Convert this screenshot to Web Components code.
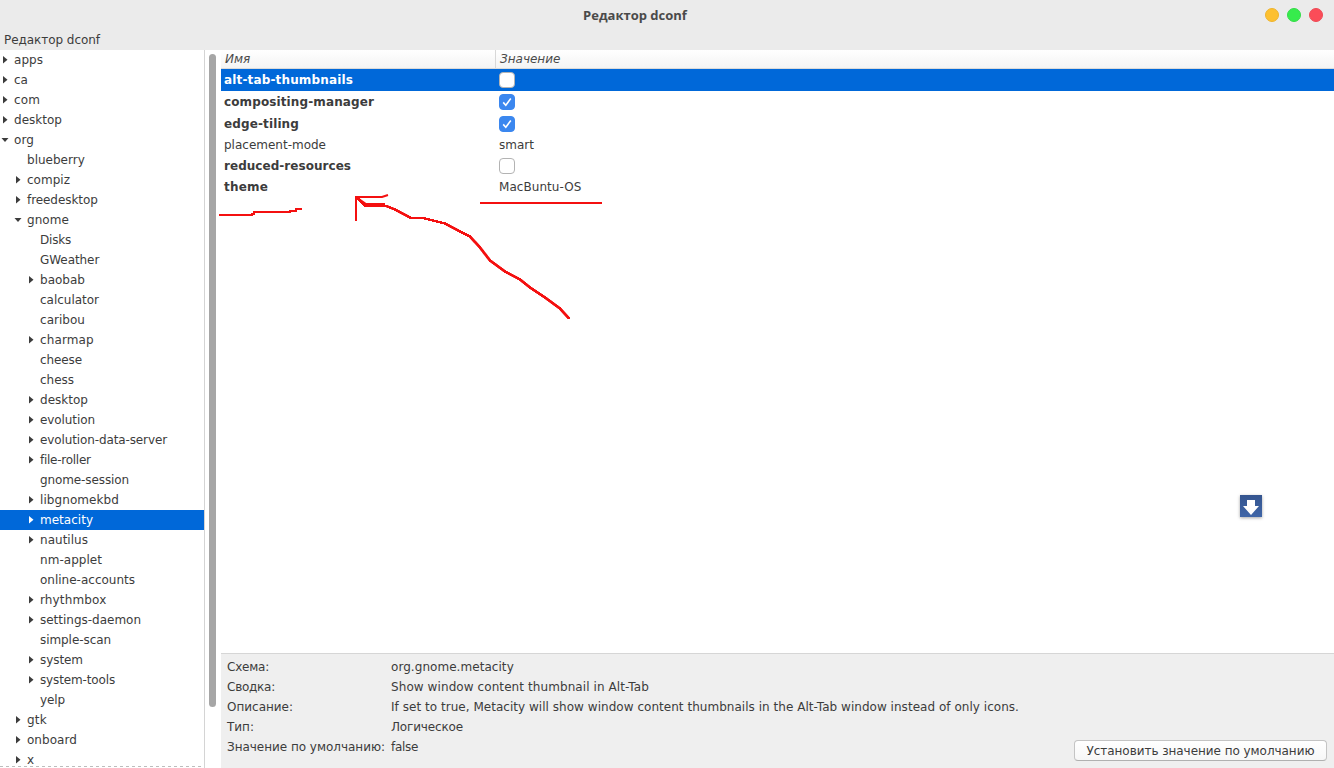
<!DOCTYPE html>
<html>
<head>
<meta charset="utf-8">
<title>Редактор dconf</title>
<style>
    html, body {
        margin: 0;
        height: 100%;
        overflow: hidden;
    }
    body {
        font: 13px "DejaVu Sans", sans-serif;
        color: #3c3c3c;
    }
</style>
</head>
<body>
<dconf-window>
    <title-bar slot="title">Редактор dconf</title-bar>
    <menu-bar slot="menu">Редактор dconf</menu-bar>
    <schema-tree slot="tree"></schema-tree>
    <key-list slot="keys"></key-list>
    <key-details slot="details"></key-details>
    <ink-overlay slot="overlay"></ink-overlay>
</dconf-window>

<script>
const TREE = [
    [0, 'apps', 'closed'], [0, 'ca', 'closed'], [0, 'com', 'closed'], [0, 'desktop', 'closed'],
    [0, 'org', 'open'], [1, 'blueberry'], [1, 'compiz', 'closed'], [1, 'freedesktop', 'closed'],
    [1, 'gnome', 'open'], [2, 'Disks'], [2, 'GWeather'], [2, 'baobab', 'closed'],
    [2, 'calculator'], [2, 'caribou'], [2, 'charmap', 'closed'], [2, 'cheese'], [2, 'chess'],
    [2, 'desktop', 'closed'], [2, 'evolution', 'closed'], [2, 'evolution-data-server', 'closed'],
    [2, 'file-roller', 'closed'], [2, 'gnome-session'], [2, 'libgnomekbd', 'closed'],
    [2, 'metacity', 'closed', true], [2, 'nautilus', 'closed'], [2, 'nm-applet'],
    [2, 'online-accounts'], [2, 'rhythmbox', 'closed'], [2, 'settings-daemon', 'closed'],
    [2, 'simple-scan'], [2, 'system', 'closed'], [2, 'system-tools', 'closed'], [2, 'yelp'],
    [1, 'gtk', 'closed'], [1, 'onboard', 'closed'], [1, 'x', 'closed'],
];

const KEYS = [
    { name: 'alt-tab-thumbnails', bold: true, check: false, selected: true },
    { name: 'compositing-manager', bold: true, check: true },
    { name: 'edge-tiling', bold: true, check: true },
    { name: 'placement-mode', value: 'smart' },
    { name: 'reduced-resources', bold: true, check: false },
    { name: 'theme', bold: true, value: 'MacBuntu-OS' },
];

const DETAILS = [
    ['Схема:', 'org.gnome.metacity'],
    ['Сводка:', 'Show window content thumbnail in Alt-Tab'],
    ['Описание:', 'If set to true, Metacity will show window content thumbnails in the Alt-Tab window instead of only icons.'],
    ['Тип:', 'Логическое'],
    ['Значение по умолчанию:', 'false'],
];

// The screenshot has fully hinted text, every glyph advance is a whole pixel.
// Spread the difference over the string so the widths come out the same.
const measure = document.createElement('canvas').getContext('2d');
function hintText(el, text, prefix = '') {
    measure.font = `${prefix} 12px "DejaVu Sans"`;
    let exact = 0;
    let rounded = 0;
    for (const ch of text) {
        const w = measure.measureText(ch).width;
        exact += w;
        rounded += Math.round(w);
    }
    el.style.fontKerning = 'normal';
    el.style.letterSpacing = ((rounded - exact) / text.length).toFixed(3) + 'px';
}

// Squeeze a hand drawn line into small flat steps, like a mouse stroke in an image editor.
function stairs(points) {
    let d = `M${points[0][0]} ${points[0][1]}`;
    for (let i = 1; i < points.length; i++) {
        const [x0, y0] = points[i - 1];
        const [x1, y1] = points[i];
        const steps = Math.max(1, Math.round(Math.abs(y1 - y0)));
        for (let s = 1; s <= steps; s++) {
            const x = x0 + (x1 - x0) * s / steps;
            const y = y0 + (y1 - y0) * s / steps;
            d += ` H${x.toFixed(1)} V${y.toFixed(1)}`;
        }
    }
    return d;
}

class DconfWindow extends HTMLElement {
    constructor() {
        super();
        this.attachShadow({ mode: 'open' }).innerHTML = `
            <style>
                :host {
                    display: grid;
                    grid-template-columns: 205px 16px 1fr;
                    grid-template-rows: 30px 20px 1fr auto;
                    width: 1334px;
                    height: 768px;
                    overflow: hidden;
                    position: relative;
                    background: #fff;
                }
                ::slotted([slot=title]), ::slotted([slot=menu]) { grid-column: 1 / -1; }
                ::slotted([slot=tree]) { grid-row: 3 / 5; grid-column: 1; }
                .bar { grid-row: 3 / 5; grid-column: 2; background: #fff; position: relative; }
                .thumb {
                    position: absolute;
                    left: 4px;
                    top: 4px;
                    width: 7px;
                    height: 653px;
                    border-radius: 4px;
                    background: #a6a6a6;
                }
                ::slotted([slot=keys]) { grid-row: 3; grid-column: 3; min-height: 0; }
                ::slotted([slot=details]) { grid-row: 4; grid-column: 3; }
            </style>
            <slot name="title"></slot>
            <slot name="menu"></slot>
            <slot name="tree"></slot>
            <div class="bar"><div class="thumb"></div></div>
            <slot name="keys"></slot>
            <slot name="details"></slot>
            <slot name="overlay"></slot>
        `;
    }
}
customElements.define('dconf-window', DconfWindow);

class TitleBar extends HTMLElement {
    constructor() {
        super();
        this.attachShadow({ mode: 'open' }).innerHTML = `
            <style>
                :host {
                    display: flex;
                    align-items: center;
                    justify-content: center;
                    position: relative;
                    padding-right: 64px;
                    background: #ebebeb;
                    font: bold 13px "Open Sans", "DejaVu Sans", sans-serif;
                    color: #4a4a4a;
                }
                .dots {
                    position: absolute;
                    right: 11px;
                    top: 8px;
                    display: flex;
                    gap: 8px;
                }
                i {
                    width: 14px;
                    height: 14px;
                    border-radius: 50%;
                    box-sizing: border-box;
                }
            </style>
            <slot></slot>
            <div class="dots">
                <i style="background:#fdc030;border:1px solid #eeb42e"></i>
                <i style="background:#36ec4c;border:1px solid #33dc48"></i>
                <i style="background:#fb4c58;border:1px solid #ee4a55"></i>
            </div>
        `;
    }
}
customElements.define('title-bar', TitleBar);

class MenuBar extends HTMLElement {
    constructor() {
        super();
        this.attachShadow({ mode: 'open' }).innerHTML = `
            <style>
                :host {
                    display: flex;
                    align-items: center;
                    padding-left: 4px;
                    background: #ebebeb;
                    font-size: 12px;
                }
            </style>
            <slot></slot>
        `;
    }

    connectedCallback() {
        hintText(this, this.textContent);
    }
}
customElements.define('menu-bar', MenuBar);

class TreeRow extends HTMLElement {
    constructor() {
        super();
        this.attachShadow({ mode: 'open' }).innerHTML = `
            <style>
                :host {
                    display: flex;
                    align-items: center;
                    height: 20px;
                    font-size: 12px;
                    white-space: nowrap;
                }
                :host([selected]) { background: #0068d9; color: #fff; }
                svg { width: 14px; height: 14px; flex: none; fill: #3c3c3c; }
                :host([selected]) svg { fill: #fff; }
                .pad { flex: none; }
            </style>
            <div class="pad"></div>
            <svg viewBox="0 0 14 14"><path></path></svg>
            <slot></slot>
        `;
    }

    connectedCallback() {
        const level = Number(this.getAttribute('level')) || 0;
        this.shadowRoot.querySelector('.pad').style.width = (level * 13) + 'px';
        const path = this.shadowRoot.querySelector('path');
        const state = this.getAttribute('state');
        if (state === 'closed') {
            path.setAttribute('d', 'M3 3 L7.5 6.7 L3 10.5 Z');
        } else if (state === 'open') {
            path.setAttribute('d', 'M1.5 5 L8.5 5 L5 9 Z');
        }
        hintText(this, this.textContent);
    }
}
customElements.define('tree-row', TreeRow);

class SchemaTree extends HTMLElement {
    constructor() {
        super();
        this.attachShadow({ mode: 'open' }).innerHTML = `
            <style>
                :host {
                    display: block;
                    box-sizing: border-box;
                    overflow: hidden;
                    background: #fff;
                    border-right: 1px solid #d4d4d4;
                    position: relative;
                }
                .undershoot {
                    position: absolute;
                    left: 0;
                    right: 0;
                    bottom: 1px;
                    height: 1px;
                    background: repeating-linear-gradient(90deg, #bdbdbd 0 3px, transparent 3px 6px);
                }
            </style>
            <slot></slot>
            <div class="undershoot"></div>
        `;
    }

    connectedCallback() {
        TREE.forEach(([level, name, state, selected]) => {
            const row = document.createElement('tree-row');
            row.setAttribute('level', level);
            if (state) row.setAttribute('state', state);
            if (selected) row.setAttribute('selected', '');
            row.textContent = name;
            this.appendChild(row);
        });
    }
}
customElements.define('schema-tree', SchemaTree);

class KeyCheck extends HTMLElement {
    constructor() {
        super();
        this.attachShadow({ mode: 'open' }).innerHTML = `
            <style>
                :host {
                    display: block;
                    box-sizing: border-box;
                    width: 16px;
                    height: 16px;
                    border-radius: 4px;
                    border: 1px solid #b3b3b3;
                    background: #fff;
                }
                :host([checked]) { background: #3b87ef; border-color: #3b87ef; }
                svg { display: none; width: 14px; height: 14px; }
                :host([checked]) svg { display: block; }
            </style>
            <svg viewBox="0 0 14 14"><path d="M3.2 7.4 L5.8 10.2 L10.8 3.6" fill="none" stroke="#fff" stroke-width="1.6"></path></svg>
        `;
    }
}
customElements.define('key-check', KeyCheck);

class KeyRow extends HTMLElement {
    constructor() {
        super();
        this.attachShadow({ mode: 'open' }).innerHTML = `
            <style>
                :host {
                    display: grid;
                    grid-template-columns: 278px 1fr;
                    align-items: center;
                    min-height: 20px;
                    font-size: 12px;
                }
                :host([bold]) .name { font-weight: bold; }
                :host([check]) { min-height: 22px; }
                :host([selected]) { background: #0068d9; color: #fff; }
                .name { padding-left: 3px; }
            </style>
            <div class="name"><slot name="name"></slot></div>
            <div class="value"><slot></slot></div>
        `;
    }
}
customElements.define('key-row', KeyRow);

class KeyList extends HTMLElement {
    constructor() {
        super();
        this.attachShadow({ mode: 'open' }).innerHTML = `
            <style>
                :host { display: block; background: #fff; overflow: hidden; }
                header {
                    display: grid;
                    grid-template-columns: 274px 1fr;
                    height: 19px;
                    box-sizing: border-box;
                    background: linear-gradient(#fff, #f4f4f4);
                    border-bottom: 1px solid #dadada;
                    font-size: 12px;
                    font-style: italic;
                    line-height: 18px;
                    color: #4a4a4a;
                }
                header div { padding-left: 4px; }
                header div + div { border-left: 1px solid #d8d8d8; }
            </style>
            <header><div>Имя</div><div>Значение</div></header>
            <slot></slot>
        `;
    }

    connectedCallback() {
        KEYS.forEach(key => {
            const row = document.createElement('key-row');
            if (key.bold) row.setAttribute('bold', '');
            if (key.selected) row.setAttribute('selected', '');

            const name = document.createElement('span');
            name.slot = 'name';
            name.textContent = key.name;
            hintText(name, key.name, key.bold ? 'bold' : '');
            row.appendChild(name);

            if (key.check !== undefined) {
                row.setAttribute('check', '');
                const box = document.createElement('key-check');
                if (key.check) box.setAttribute('checked', '');
                row.appendChild(box);
            } else {
                const value = document.createElement('span');
                value.textContent = key.value;
                hintText(value, key.value);
                row.appendChild(value);
            }
            this.appendChild(row);
        });
    }
}
customElements.define('key-list', KeyList);

class KeyDetails extends HTMLElement {
    constructor() {
        super();
        this.attachShadow({ mode: 'open' }).innerHTML = `
            <style>
                :host {
                    display: block;
                    box-sizing: border-box;
                    height: 115px;
                    padding: 3px 6px 0;
                    background: #efefef;
                    border-top: 1px solid #d6d6d6;
                    font-size: 12px;
                    position: relative;
                }
                dl {
                    display: grid;
                    grid-template-columns: 164px 1fr;
                    grid-auto-rows: 20px;
                    align-items: center;
                    margin: 0;
                }
                dd { margin: 0; }
                button {
                    position: absolute;
                    right: 7px;
                    bottom: 7px;
                    width: 253px;
                    height: 21px;
                    padding: 0;
                    font: inherit;
                    color: inherit;
                    background: linear-gradient(#fff, #f7f7f7);
                    border: 1px solid #c4c4c4;
                    border-bottom-color: #b0b0b0;
                    border-radius: 4px;
                }
            </style>
            <dl></dl>
            <button>Установить значение по умолчанию</button>
        `;
    }

    connectedCallback() {
        const list = this.shadowRoot.querySelector('dl');
        DETAILS.forEach(([label, value]) => {
            const dt = document.createElement('dt');
            dt.textContent = label;
            hintText(dt, label);
            const dd = document.createElement('dd');
            dd.textContent = value;
            hintText(dd, value);
            list.append(dt, dd);
        });
        const button = this.shadowRoot.querySelector('button');
        hintText(button, button.textContent);
    }
}
customElements.define('key-details', KeyDetails);

// hand drawn marks and the floating download icon sit over the window
class InkOverlay extends HTMLElement {
    constructor() {
        super();
        const long = stairs([[356, 197], [365, 206], [385, 206], [395, 210], [410, 218], [425, 219], [445, 224],
            [460, 232], [470, 237], [480, 248], [490, 261], [505, 272], [520, 280], [530, 288], [545, 298],
            [560, 309], [569, 319]]);
        this.attachShadow({ mode: 'open' }).innerHTML = `
            <style>
                :host {
                    position: absolute;
                    inset: 0;
                    pointer-events: none;
                }
                svg.ink { position: absolute; left: 0; top: 0; }
                .ink path { fill: none; stroke: #f41010; stroke-width: 2; }
                .down {
                    position: absolute;
                    left: 1240px;
                    top: 495px;
                    width: 22px;
                    height: 22px;
                    box-shadow: 0 1px 3px rgba(0,0,0,.35);
                }
            </style>
            <svg class="ink" width="1334" height="768">
                <path d="M219 215 H252 V214 H254 V212 H290 V211 H296 V209 H302"></path>
                <path d="M480 203 H602"></path>
                <path d="M355 197 H382 L388 195 M356 197 V221"></path>
                <path d="M356 197 L366 204 H385"></path>
                <path d="${long}"></path>
            </svg>
            <svg class="down" viewBox="0 0 22 22">
                <defs>
                    <linearGradient id="tile" x1="0" y1="0" x2="0" y2="1">
                        <stop offset="0" stop-color="#35558f"></stop>
                        <stop offset="1" stop-color="#4066a8"></stop>
                    </linearGradient>
                </defs>
                <rect width="22" height="22" fill="url(#tile)"></rect>
                <path d="M7 5 H15 V11 H19 L11 20 L3 11 H7 Z" fill="#fff"></path>
            </svg>
        `;
    }
}
customElements.define('ink-overlay', InkOverlay);
</script>
</body>
</html>
